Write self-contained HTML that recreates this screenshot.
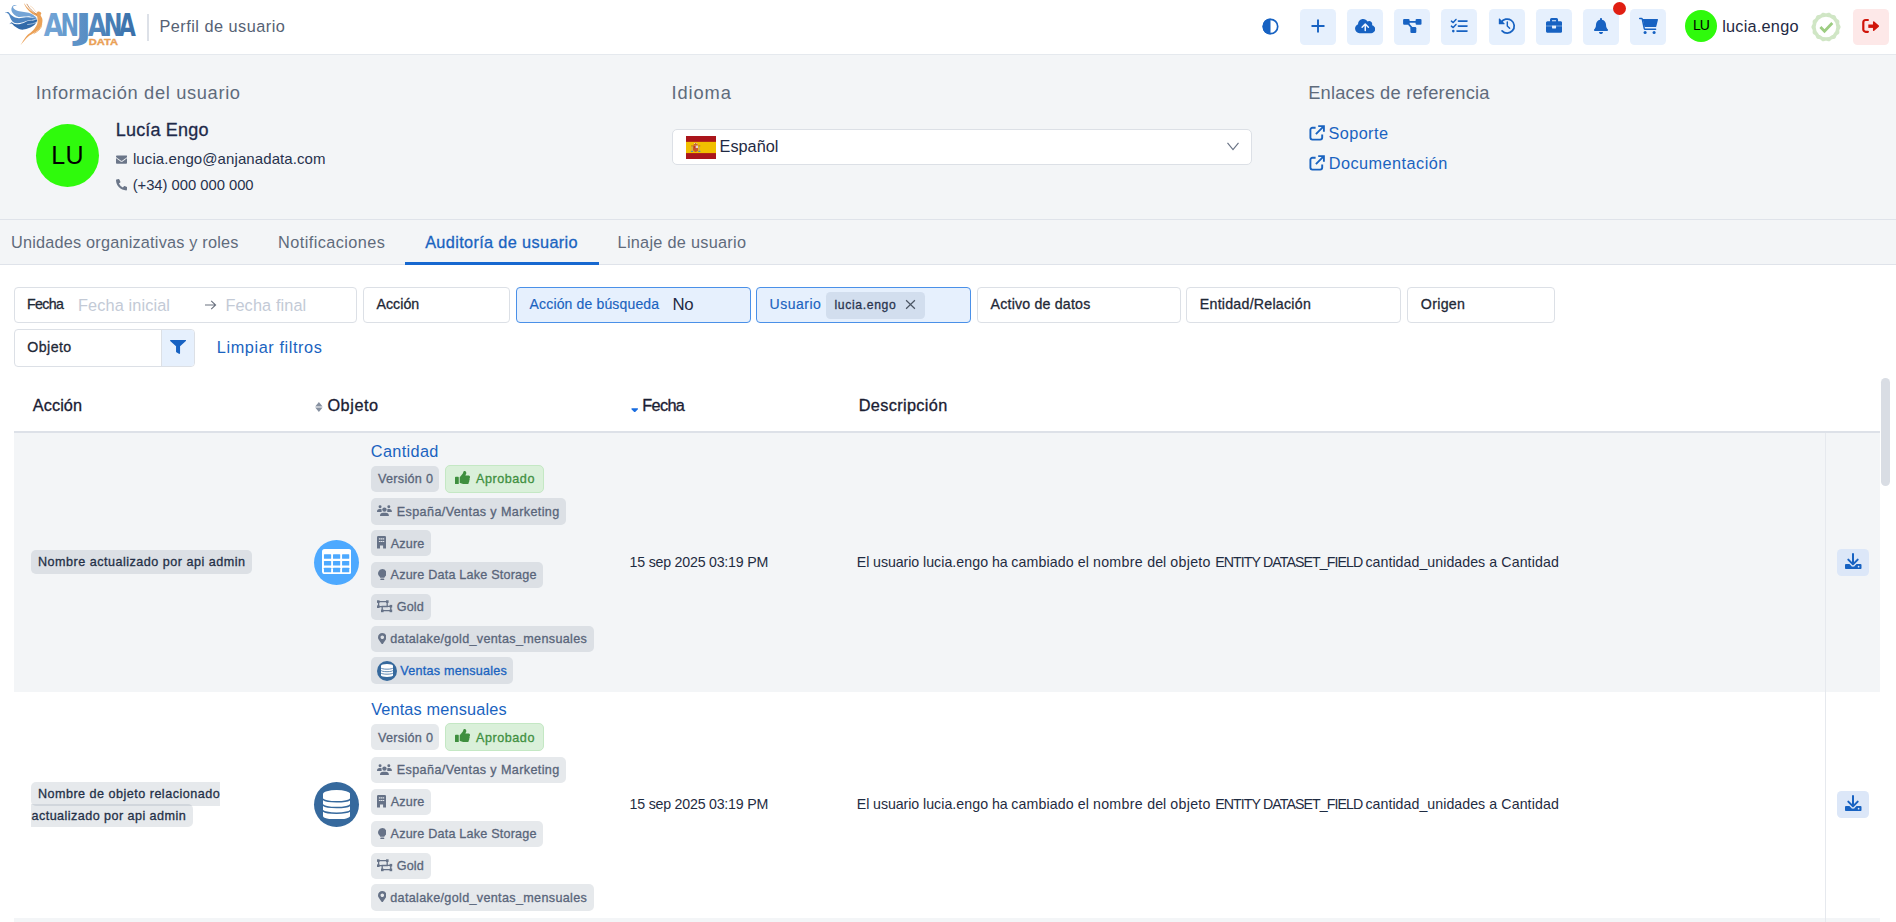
<!DOCTYPE html>
<html lang="es">
<head>
<meta charset="utf-8">
<title>Perfil de usuario</title>
<style>
html,body{margin:0;padding:0;background:#fff;}
body{width:1896px;height:922px;overflow:hidden;position:relative;font-family:"Liberation Sans",Arial,sans-serif;}
#app{position:absolute;left:0;top:0;width:1896px;height:922px;overflow:hidden;background:#fff;}
.a{position:absolute;box-sizing:border-box;display:block;}
.g{position:absolute;left:0;top:0;}
.t{position:absolute;white-space:nowrap;line-height:20px;font-weight:400;}
.t.sb{-webkit-text-stroke:0.3px currentColor;}
.t.md{-webkit-text-stroke:0.16px currentColor;}
.t.b{font-weight:700;}
a{text-decoration:none;color:inherit;}

</style>
</head>
<body>
<div id="app">
<header class="g">
<div class="a" style="left:0px;top:0px;width:1896px;height:55px;background:#fff;border-bottom:1px solid #e5e9ee;"></div>
<svg class="a" style="left:0px;top:0px;" width="150" height="54" viewBox="0 0 150 54"><defs><linearGradient id="lg0"><stop offset="0" stop-color="#75a7d8"/><stop offset="1" stop-color="#699ccf"/></linearGradient><linearGradient id="lg1"><stop offset="0" stop-color="#699ccf"/><stop offset="1" stop-color="#6095c9"/></linearGradient><linearGradient id="lg2"><stop offset="0" stop-color="#6095c9"/><stop offset="1" stop-color="#568bc1"/></linearGradient><linearGradient id="lg3"><stop offset="0" stop-color="#568bc1"/><stop offset="1" stop-color="#4b81b8"/></linearGradient><linearGradient id="lg4"><stop offset="0" stop-color="#4b81b8"/><stop offset="1" stop-color="#4379b1"/></linearGradient><linearGradient id="lg5"><stop offset="0" stop-color="#4379b1"/><stop offset="1" stop-color="#396fa9"/></linearGradient></defs><path fill="#74a4d6" d="M16.90 5.20C16.77 5.13 14.12 4.90 13.20 5.50C12.28 6.10 11.60 7.72 11.40 8.80C11.20 9.88 11.48 10.97 12.00 12.00C12.52 13.03 13.42 14.18 14.50 15.00C15.58 15.82 16.92 16.63 18.50 16.90C20.08 17.17 22.08 16.68 24.00 16.60C25.92 16.52 27.88 16.07 30.00 16.40C32.12 16.73 36.03 18.77 36.70 18.60C37.37 18.43 35.12 16.28 34.00 15.40C32.88 14.52 31.67 13.85 30.00 13.30C28.33 12.75 26.00 12.48 24.00 12.10C22.00 11.72 19.57 11.47 18.00 11.00C16.43 10.53 15.43 9.98 14.60 9.30C13.77 8.62 13.10 7.47 13.00 6.90C12.90 6.33 13.35 6.18 14.00 5.90C14.65 5.62 17.03 5.27 16.90 5.20Z"/><path fill="#4d84c0" d="M5.30 12.30C5.45 12.12 7.42 11.72 8.30 12.10C9.18 12.48 9.65 13.78 10.60 14.60C11.55 15.42 12.60 16.40 14.00 17.00C15.40 17.60 17.00 18.17 19.00 18.20C21.00 18.23 23.67 17.28 26.00 17.20C28.33 17.12 31.20 17.42 33.00 17.70C34.80 17.98 36.80 18.57 36.80 18.90C36.80 19.23 34.63 19.40 33.00 19.70C31.37 20.00 28.83 20.22 27.00 20.70C25.17 21.18 23.67 22.17 22.00 22.60C20.33 23.03 18.50 23.40 17.00 23.30C15.50 23.20 14.07 22.78 13.00 22.00C11.93 21.22 11.27 19.80 10.60 18.60C9.93 17.40 9.53 15.70 9.00 14.80C8.47 13.90 8.02 13.62 7.40 13.20C6.78 12.78 5.15 12.48 5.30 12.30Z"/><path fill="#326aa9" d="M9.30 24.40C9.43 24.18 10.88 22.58 11.40 22.30C11.92 22.02 11.80 22.42 12.40 22.70C13.00 22.98 13.90 23.75 15.00 24.00C16.10 24.25 17.50 24.42 19.00 24.20C20.50 23.98 22.50 23.23 24.00 22.70C25.50 22.17 26.33 21.42 28.00 21.00C29.67 20.58 32.50 20.43 34.00 20.20C35.50 19.97 36.57 19.30 37.00 19.60C37.43 19.90 37.10 21.07 36.60 22.00C36.10 22.93 35.27 24.18 34.00 25.20C32.73 26.22 30.75 27.37 29.00 28.10C27.25 28.83 25.17 29.47 23.50 29.60C21.83 29.73 20.42 29.40 19.00 28.90C17.58 28.40 16.12 27.42 15.00 26.60C13.88 25.78 13.03 24.50 12.30 24.00C11.57 23.50 11.10 23.53 10.60 23.60C10.10 23.67 9.17 24.62 9.30 24.40Z"/><path fill="none" stroke="#fff" stroke-width="0.55" stroke-linecap="round" d="M27.600 24.500C31 24.300 34 23.500 36.400 22.300"/><path fill="#eba157" d="M24.20 3.30C24.37 3.30 25.53 5.38 26.50 6.50C27.47 7.62 28.67 8.92 30.00 10.00C31.33 11.08 33.42 12.43 34.50 13.00C35.58 13.57 35.98 13.60 36.50 13.40C37.02 13.20 37.08 12.08 37.60 11.80C38.12 11.52 38.98 11.47 39.60 11.70C40.22 11.93 41.13 12.62 41.30 13.20C41.47 13.78 40.45 14.32 40.60 15.20C40.75 16.08 41.90 17.45 42.20 18.50C42.50 19.55 42.50 20.42 42.40 21.50C42.30 22.58 42.13 23.72 41.60 25.00C41.07 26.28 40.43 27.90 39.20 29.20C37.97 30.50 35.97 31.63 34.20 32.80C32.43 33.97 30.22 34.92 28.60 36.20C26.98 37.48 25.78 39.08 24.50 40.50C23.22 41.92 21.27 44.42 20.90 44.70C20.53 44.98 21.35 43.65 22.30 42.20C23.25 40.75 25.10 37.70 26.60 36.00C28.10 34.30 29.93 33.30 31.30 32.00C32.67 30.70 33.80 29.62 34.80 28.20C35.80 26.78 36.85 25.03 37.30 23.50C37.75 21.97 37.58 20.22 37.50 19.00C37.42 17.78 37.55 17.00 36.80 16.20C36.05 15.40 34.38 15.15 33.00 14.20C31.62 13.25 29.75 11.78 28.50 10.50C27.25 9.22 26.22 7.70 25.50 6.50C24.78 5.30 24.03 3.30 24.20 3.30Z"/><path fill="none" stroke="#b5703a" stroke-width="0.7" stroke-linecap="round" d="M27.00 4.20C27.42 4.83 28.50 6.78 29.50 8.00C30.50 9.22 31.83 10.47 33.00 11.50C34.17 12.53 35.92 13.75 36.50 14.20"/><path fill="none" stroke="#f0b57c" stroke-width="0.45" stroke-linecap="round" d="M30.50 6.20C30.92 6.50 32.25 7.20 33.00 8.00C33.75 8.80 34.42 10.30 35.00 11.00C35.58 11.70 36.25 12.00 36.50 12.20"/><path fill="none" stroke="#eba157" stroke-width="0.8" stroke-linecap="round" d="M41.60 24.20C41.53 24.67 41.72 25.95 41.20 27.00C40.68 28.05 39.70 29.42 38.50 30.50C37.30 31.58 34.75 33.00 34.00 33.50"/><g font-family="DejaVu Sans, Liberation Sans, sans-serif" font-weight="700"><text transform="translate(43.77 36.00) scale(0.804 1.000)" font-size="31.6" fill="url(#lg0)">A</text><text transform="translate(60.56 36.00) scale(0.703 1.000)" font-size="31.6" fill="url(#lg1)">N</text><text transform="translate(74.97 38.50) scale(1.450 1.106)" font-size="31.6" fill="url(#lg2)">J</text><text transform="translate(87.68 36.00) scale(0.770 1.000)" font-size="31.6" fill="url(#lg3)">A</text><text transform="translate(103.64 36.00) scale(0.708 1.000)" font-size="31.6" fill="url(#lg4)">N</text><text transform="translate(118.69 36.00) scale(0.700 1.000)" font-size="31.6" fill="url(#lg5)">A</text></g> <text x="88.8" y="44.9" font-family="Liberation Sans, Arial, sans-serif" font-weight="700" font-size="9.6" fill="#eaa055" stroke="#eaa055" stroke-width="0.35" textLength="29.2" lengthAdjust="spacingAndGlyphs">DATA</text></svg>
<div class="a" style="left:146.5px;top:13.5px;width:2px;height:27.5px;background:#dde1e8;"></div>

<span class="t" style="left:159.41px;top:16.00px;font-size:16.3px;color:#566274;letter-spacing:0.487px;">Perfil de usuario</span>

<div class="a" style="left:1300px;top:9px;width:36px;height:36px;background:#e6f0fd;border-radius:4.5px;"></div>
<div class="a" style="left:1347px;top:9px;width:36px;height:36px;background:#e6f0fd;border-radius:4.5px;"></div>
<div class="a" style="left:1394px;top:9px;width:36px;height:36px;background:#e6f0fd;border-radius:4.5px;"></div>
<div class="a" style="left:1441px;top:9px;width:36px;height:36px;background:#e6f0fd;border-radius:4.5px;"></div>
<div class="a" style="left:1489px;top:9px;width:36px;height:36px;background:#e6f0fd;border-radius:4.5px;"></div>
<div class="a" style="left:1536px;top:9px;width:36px;height:36px;background:#e6f0fd;border-radius:4.5px;"></div>
<div class="a" style="left:1583px;top:9px;width:36px;height:36px;background:#e6f0fd;border-radius:4.5px;"></div>
<div class="a" style="left:1630px;top:9px;width:36px;height:36px;background:#e6f0fd;border-radius:4.5px;"></div>
<svg class="a" style="left:1262.3px;top:17.5px;" width="17" height="17" viewBox="0 0 17 17"><circle cx="8.5" cy="8.5" r="7.2" fill="#fff" stroke="#1762c2" stroke-width="1.7"/><path d="M8.5 0.5 A8 8 0 0 0 8.5 16.5 Z" fill="#1762c2"/></svg>
<svg class="a" style="left:1310px;top:18px;" width="16" height="16" viewBox="0 0 16 16"><path d="M8 1.5V14.5M1.5 8H14.5" stroke="#1762c2" stroke-width="1.9" fill="none"/></svg>
<svg class="a" style="left:1355px;top:18px;" width="20.3" height="16.2" viewBox="0 0 640 512"><path fill="#1762c2" d="M537.6 226.6c4.1-10.7 6.4-22.4 6.4-34.6 0-53-43-96-96-96-19.7 0-38.1 6-53.3 16.2C367 64.2 315.3 32 256 32c-88.4 0-160 71.6-160 160 0 2.7.1 5.4.2 8.1C40.2 219.8 0 273.2 0 336c0 79.5 64.5 144 144 144h368c70.7 0 128-57.300 128-128 0-61.900-44-113.600-102.400-125.400z"/></svg>
<svg class="a" style="left:1356px;top:20px;" width="18" height="14" viewBox="1356 20 18 14"><path d="M1365.250 24.200V30.400M1362.100 27.300L1365.250 24l3.150 3.300" fill="none" stroke="#eef4fe" stroke-width="1.500" stroke-linecap="round" stroke-linejoin="round"/></svg>
<svg class="a" style="left:1400px;top:16px;" width="24" height="20" viewBox="1400 16 24 20"><rect x="1403.100" y="18.900" width="6.500" height="5.900" rx="1.100" fill="#1762c2"/><rect x="1415.600" y="18.900" width="5.900" height="5.900" rx="1.100" fill="#1762c2"/><rect x="1410.400" y="27.100" width="5.900" height="5.900" rx="1.100" fill="#1762c2"/><path d="M1409 21.850H1416M1408.600 24.100L1412.400 28.400" fill="none" stroke="#1762c2" stroke-width="1.600"/></svg>
<svg class="a" style="left:1448px;top:16px;" width="24" height="20" viewBox="1448 16 24 20"><path d="M1458.400 21.100H1467M1458.400 26.100H1467M1457 31.100H1467" fill="none" stroke="#1762c2" stroke-width="1.650" stroke-linecap="round"/><path d="M1451.400 21.100l1.800 1.500 2.800-3.200M1451.400 26.100l1.800 1.500 2.800-3.200" fill="none" stroke="#1762c2" stroke-width="1.450" stroke-linecap="round" stroke-linejoin="round"/><circle cx="1453.300" cy="31.100" r="1.300" fill="#1762c2"/></svg>
<svg class="a" style="left:1496px;top:16px;" width="24" height="20" viewBox="1496 16 24 20"><path d="M1501.140 22.550A7 7 0 1 1 1502.080 30.820" fill="none" stroke="#1762c2" stroke-width="1.750" stroke-linecap="round"/><path d="M1498.800 18.900a.5.5 0 0 1 .85-.35l4.900 4.900a.5.5 0 0 1-.35.850h-4.900a.5.500 0 0 1-.5-.500z" fill="#1762c2"/><path d="M1507.300 22V26l2.300 2.300" fill="none" stroke="#1762c2" stroke-width="1.450" stroke-linecap="round" stroke-linejoin="round"/></svg>
<div class="a" style="left:1546px;top:25.2px;width:6.05px;height:1.9px;background:#1762c2;opacity:.55;"></div>
<div class="a" style="left:1556.05px;top:25.2px;width:6.05px;height:1.9px;background:#1762c2;opacity:.55;"></div>
<svg class="a" style="left:1546px;top:17.15px;" width="16.1" height="16.9" viewBox="0 0 512 512" preserveAspectRatio="none"><path fill="#1762c2" d="M320 336c0 8.840-7.160 16-16 16h-96c-8.840 0-16-7.160-16-16v-48H0v144c0 25.600 22.400 48 48 48h416c25.600 0 48-22.400 48-48V288H320v48zm144-208h-80V80c0-25.600-22.400-48-48-48H176c-25.600 0-48 22.400-48 48v48H48c-25.600 0-48 22.400-48 48v80h512v-80c0-25.600-22.400-48-48-48zm-144 0H192V96h128v32z"/></svg>
<svg class="a" style="left:1594.3px;top:18px;" width="14" height="16.1" viewBox="0 0 448 512"><path fill="#1762c2" d="M224 512c35.320 0 63.970-28.650 63.970-64H160.030c0 35.350 28.650 64 63.970 64zm215.390-149.710c-19.320-20.760-55.470-51.990-55.470-154.290 0-77.700-54.480-139.900-127.940-155.160V32c0-17.670-14.320-32-31.980-32s-31.980 14.330-31.980 32v20.840C118.560 68.100 64.080 130.300 64.080 208c0 102.300-36.150 133.530-55.470 154.290-6 6.450-8.660 14.160-8.610 21.710.11 16.400 12.980 32 32.100 32h383.800c19.120 0 32-15.600 32.100-32 .05-7.550-2.610-15.270-8.610-21.710z"/></svg>
<svg class="a" style="left:1636px;top:16px;" width="26" height="20" viewBox="1636 16 26 20"><path d="M1642.700 19.100H1657.400a.6.600 0 0 1 .58.760l-1.700 6.600a.8.800 0 0 1-.78.600H1644.500z" fill="#1762c2"/><path d="M1639.700 18.500h1.700a.9.900 0 0 1 .88.720l2 9.400a.8.800 0 0 0 .78.630H1655.600" fill="none" stroke="#1762c2" stroke-width="1.450" stroke-linecap="round" stroke-linejoin="round"/><circle cx="1645.100" cy="32.450" r="1.550" fill="#1762c2"/><circle cx="1654.100" cy="32.450" r="1.550" fill="#1762c2"/></svg>
<div class="a" style="left:1612.6px;top:2px;width:13.4px;height:13.4px;background:#e01e12;border-radius:7px;"></div>
<div class="a" style="left:1685px;top:10px;width:32px;height:32px;background:#2ffa0c;border-radius:16px;"></div>

<span class="t" style="left:1693.01px;top:15.00px;font-size:14px;color:#000;letter-spacing:-1.021px;">LU</span>


<span class="t" style="left:1722.20px;top:16.00px;font-size:16.3px;color:#1f2a44;letter-spacing:0.231px;">lucia.engo</span>

<svg class="a" style="left:1811px;top:11.9px;" width="30" height="30" viewBox="0 0 30 30"><polygon points="29.60,15.00 29.54,15.51 29.37,16.00 29.12,16.48 28.85,16.95 28.60,17.40 28.41,17.85 28.31,18.32 28.29,18.81 28.33,19.33 28.37,19.87 28.38,20.40 28.30,20.92 28.12,21.40 27.83,21.82 27.45,22.19 27.01,22.51 26.57,22.80 26.15,23.10 25.80,23.44 25.52,23.82 25.29,24.27 25.10,24.75 24.91,25.26 24.67,25.74 24.37,26.16 23.99,26.50 23.53,26.74 23.02,26.89 22.49,26.99 21.96,27.06 21.46,27.16 21.01,27.31 20.59,27.55 20.20,27.86 19.81,28.22 19.42,28.59 18.99,28.91 18.53,29.15 18.03,29.27 17.52,29.27 16.99,29.18 16.47,29.03 15.97,28.86 15.48,28.74 15.00,28.70 14.52,28.74 14.03,28.86 13.53,29.03 13.01,29.18 12.48,29.27 11.97,29.27 11.47,29.15 11.01,28.91 10.58,28.59 10.19,28.22 9.80,27.86 9.41,27.55 8.99,27.31 8.54,27.16 8.04,27.06 7.51,26.99 6.98,26.89 6.47,26.74 6.01,26.50 5.63,26.16 5.33,25.74 5.09,25.26 4.90,24.75 4.71,24.27 4.48,23.82 4.20,23.44 3.85,23.10 3.43,22.80 2.99,22.51 2.55,22.19 2.17,21.82 1.88,21.40 1.70,20.92 1.62,20.40 1.63,19.87 1.67,19.33 1.71,18.81 1.69,18.32 1.59,17.85 1.40,17.40 1.15,16.95 0.88,16.48 0.63,16.00 0.46,15.51 0.40,15.00 0.46,14.49 0.63,14.00 0.88,13.52 1.15,13.05 1.40,12.60 1.59,12.15 1.69,11.68 1.71,11.19 1.67,10.67 1.63,10.13 1.62,9.60 1.70,9.08 1.88,8.60 2.17,8.18 2.55,7.81 2.99,7.49 3.43,7.20 3.85,6.90 4.20,6.56 4.48,6.18 4.71,5.73 4.90,5.25 5.09,4.74 5.33,4.26 5.63,3.84 6.01,3.50 6.47,3.26 6.98,3.11 7.51,3.01 8.04,2.94 8.54,2.84 8.99,2.69 9.41,2.45 9.80,2.14 10.19,1.78 10.58,1.41 11.01,1.09 11.47,0.85 11.97,0.73 12.48,0.73 13.01,0.82 13.53,0.97 14.03,1.14 14.52,1.26 15.00,1.30 15.48,1.26 15.97,1.14 16.47,0.97 16.99,0.82 17.52,0.73 18.03,0.73 18.53,0.85 18.99,1.09 19.42,1.41 19.81,1.78 20.20,2.14 20.59,2.45 21.01,2.69 21.46,2.84 21.96,2.94 22.49,3.01 23.02,3.11 23.53,3.26 23.99,3.50 24.37,3.84 24.67,4.26 24.91,4.74 25.10,5.25 25.29,5.73 25.52,6.18 25.80,6.56 26.15,6.90 26.57,7.20 27.01,7.49 27.45,7.81 27.83,8.18 28.12,8.60 28.30,9.08 28.38,9.60 28.37,10.13 28.33,10.67 28.29,11.19 28.31,11.68 28.41,12.15 28.60,12.60 28.85,13.05 29.12,13.52 29.37,14.00 29.54,14.49" fill="#d0e6c5"/><circle cx="15" cy="15" r="10.300" fill="#fff"/><path d="M9.400 15l4.100 4.300 7.800-8.300" fill="none" stroke="#9dcd82" stroke-width="2.800"/></svg>
<div class="a" style="left:1853px;top:9px;width:36px;height:36px;background:#fde8e8;border-radius:4.5px;"></div>
<svg class="a" style="left:1858px;top:15px;" width="26" height="22" viewBox="1858 15 26 22"><path d="M1867.900 20H1865.700a2.400 2.400 0 0 0-2.400 2.400v7a2.400 2.400 0 0 0 2.400 2.400h2.200" fill="none" stroke="#d0150a" stroke-width="2.200" stroke-linecap="round"/><path d="M1868.300 26.200H1874" fill="none" stroke="#d0150a" stroke-width="3.400"/><path d="M1873.700 22L1878.300 26.100l-4.600 4.100z" fill="#d0150a" stroke="#d0150a" stroke-width="1.500" stroke-linejoin="round"/></svg>
</header>
<section class="g">
<div class="a" style="left:0px;top:55px;width:1896px;height:210px;background:#f3f5f7;"></div>
<div class="a" style="left:0px;top:219px;width:1896px;height:1px;background:#dfe3ea;"></div>
<div class="a" style="left:0px;top:264px;width:1896px;height:1px;background:#dfe3ea;"></div>

<span class="t" style="left:35.63px;top:82.50px;font-size:18.3px;color:#5f6b7c;letter-spacing:0.654px;">Información del usuario</span>

<div class="a" style="left:36px;top:124px;width:63px;height:63px;background:#2ffa0c;border-radius:32px;"></div>

<span class="t" style="left:51.30px;top:145.00px;font-size:25px;color:#000;letter-spacing:0.297px;">LU</span>


<span class="t sb" style="left:115.76px;top:120.00px;font-size:18px;color:#1e2a4a;letter-spacing:0.179px;">Lucía Engo</span>

<svg class="a" style="left:115.9px;top:153.8px;" width="11.2" height="11.2" viewBox="0 0 512 512"><path fill="#6b7689" d="M502.300 190.800c3.900-3.100 9.700-.2 9.700 4.700V400c0 26.500-21.500 48-48 48H48c-26.500 0-48-21.500-48-48V195.600c0-5 5.700-7.800 9.700-4.700 22.400 17.400 52.100 39.500 154.100 113.600 21.100 15.400 56.700 47.800 92.200 47.600 35.700.3 72-32.800 92.300-47.600 102-74.100 131.600-96.300 154-113.700zM256 320c23.200.4 56.600-29.200 73.400-41.400 132.700-96.300 142.800-104.700 173.400-128.700 5.800-4.500 9.200-11.500 9.200-18.900v-19c0-26.500-21.500-48-48-48H48C21.500 64 0 85.500 0 112v19c0 7.400 3.400 14.300 9.200 18.900 30.600 23.900 40.700 32.400 173.400 128.700 16.800 12.200 50.200 41.800 73.400 41.400z"/></svg>

<span class="t" style="left:132.94px;top:148.50px;font-size:15px;color:#27324d;letter-spacing:0.094px;">lucia.engo@anjanadata.com</span>

<svg class="a" style="left:115.9px;top:179px;" width="11.4" height="11.5" viewBox="0 0 512 512"><path fill="#6b7689" d="M497.390 361.800l-112-48a24 24 0 0 0-28 6.900l-49.600 60.600A370.660 370.660 0 0 1 130.600 204.110l60.600-49.600a23.940 23.940 0 0 0 6.900-28l-48-112A24.160 24.160 0 0 0 122.600.61l-104 24A24 24 0 0 0 0 48c0 256.500 207.900 464 464 464a24 24 0 0 0 23.400-18.600l24-104a24.290 24.290 0 0 0-14.010-27.600z"/></svg>

<span class="t" style="left:132.65px;top:175.00px;font-size:14.8px;color:#27324d;letter-spacing:-0.027px;">(+34) 000 000 000</span>


<span class="t" style="left:671.62px;top:82.50px;font-size:18.3px;color:#5f6b7c;letter-spacing:0.880px;">Idioma</span>

<div class="a" style="left:672px;top:129px;width:580px;height:36px;background:#fff;border:1px solid #dce0e6;border-radius:5px;"></div>
<svg class="a" style="left:686px;top:136px;" width="30" height="23" viewBox="0 0 30 23"><rect width="30" height="23" fill="#aa151b"/><rect y="5.850" width="30" height="11.250" fill="#f1bf00"/><rect x="5.400" y="9.900" width="1.300" height="5" fill="#c8a85a"/><rect x="12.700" y="9.900" width="1.300" height="5" fill="#c8a85a"/><rect x="5.100" y="9.500" width="1.900" height="0.800" fill="#b5652b"/><rect x="12.400" y="9.500" width="1.900" height="0.800" fill="#b5652b"/><rect x="4.900" y="14.900" width="2.200" height="1" fill="#4a82c0"/><rect x="12.200" y="14.900" width="2.200" height="1" fill="#4a82c0"/><path d="M7.300 9.300h4.700v4a2.350 2.350 0 0 1-4.700 0z" fill="#b9362b"/><path d="M9.650 9.300h2.350v3h-2.350z" fill="#ead0d3"/><path d="M7.300 12.300h4.700v1a2.350 2.350 0 0 1-4.700 0z" fill="#c9582a"/><path d="M7.700 9.200c0-1.400.8-2.100 1.950-2.100s1.950.7 1.950 2.100z" fill="#bf3a2c"/><rect x="7.600" y="8.700" width="4.100" height="0.700" fill="#e4b93a"/><circle cx="8.500" cy="7.600" r="0.500" fill="#f4ead0"/><circle cx="9.650" cy="7.100" r="0.500" fill="#e4b93a"/><circle cx="10.800" cy="7.600" r="0.500" fill="#f4ead0"/></svg>

<span class="t" style="left:719.56px;top:136.00px;font-size:16.3px;color:#1f2a44;">Español</span>

<svg class="a" style="left:1225.7px;top:141.4px;" width="14" height="11" viewBox="0 0 14 11"><path d="M1.500 1.800L7 8.700l5.500-6.900" fill="none" stroke="#697385" stroke-width="1.150"/></svg>

<span class="t" style="left:1308.13px;top:82.50px;font-size:18.3px;color:#5f6b7c;letter-spacing:0.227px;">Enlaces de referencia</span>

<svg class="a" style="left:1308.6px;top:124.8px;" width="16" height="16" viewBox="0 0 16 16"><path d="M6.6 2.8H3.4A2 2 0 0 0 1.4 4.8v7.8a2 2 0 0 0 2 2h7.8a2 2 0 0 0 2-2V9.4" fill="none" stroke="#1a63c0" stroke-width="1.9"/><path d="M9.2 1.1h5.7v5.7M14.6 1.4L6.9 9.1" fill="none" stroke="#1a63c0" stroke-width="1.9"/></svg>
<a>
<span class="t" style="left:1328.39px;top:123.00px;font-size:16.3px;color:#1a63c0;letter-spacing:0.428px;">Soporte</span>
</a>
<svg class="a" style="left:1308.6px;top:154.8px;" width="16" height="16" viewBox="0 0 16 16"><path d="M6.6 2.8H3.4A2 2 0 0 0 1.4 4.8v7.8a2 2 0 0 0 2 2h7.8a2 2 0 0 0 2-2V9.4" fill="none" stroke="#1a63c0" stroke-width="1.9"/><path d="M9.2 1.1h5.7v5.7M14.6 1.4L6.9 9.1" fill="none" stroke="#1a63c0" stroke-width="1.9"/></svg>
<a>
<span class="t" style="left:1328.66px;top:153.00px;font-size:16.3px;color:#1a63c0;letter-spacing:0.466px;">Documentación</span>
</a>
</section>
<nav class="g">

<span class="t" style="left:10.98px;top:232.00px;font-size:16.3px;color:#5f6b7c;letter-spacing:0.198px;">Unidades organizativas y roles</span>


<span class="t" style="left:278.03px;top:232.00px;font-size:16.3px;color:#5f6b7c;letter-spacing:0.429px;">Notificaciones</span>


<span class="t sb" style="left:425.13px;top:232.00px;font-size:16.3px;color:#1a63c0;letter-spacing:0.355px;">Auditoría de usuario</span>


<span class="t" style="left:617.56px;top:232.00px;font-size:16.3px;color:#5f6b7c;letter-spacing:0.274px;">Linaje de usuario</span>

<div class="a" style="left:405px;top:262px;width:194px;height:3px;background:#1668d0;"></div>
</nav>
<div class="g">
<div class="a" style="left:14px;top:287px;width:343px;height:36px;background:#fff;border:1px solid #dce0e6;border-radius:4px;"></div>

<span class="t sb" style="left:26.95px;top:294.00px;font-size:14.2px;color:#1f2937;letter-spacing:-0.617px;">Fecha</span>


<span class="t" style="left:78.03px;top:295.00px;font-size:16.3px;color:#c3cad6;letter-spacing:0.118px;">Fecha inicial</span>

<svg class="a" style="left:203.5px;top:299px;" width="13" height="12" viewBox="0 0 13 12"><path d="M1 6h10.4M7.2 1.8L11.6 6 7.2 10.2" fill="none" stroke="#6b7280" stroke-width="1.1"/></svg>

<span class="t" style="left:225.39px;top:295.00px;font-size:16.3px;color:#c3cad6;letter-spacing:0.122px;">Fecha final</span>

<div class="a" style="left:363px;top:287px;width:147px;height:36px;background:#fff;border:1px solid #dce0e6;border-radius:4px;"></div>

<span class="t sb" style="left:376.43px;top:294.00px;font-size:14.2px;color:#1f2937;letter-spacing:0.043px;">Acción</span>

<div class="a" style="left:516px;top:287px;width:235px;height:36px;background:#e6f0fd;border:1px solid #4a90e8;border-radius:4px;"></div>

<span class="t md" style="left:529.60px;top:294.00px;font-size:14px;color:#1a63c0;letter-spacing:0.153px;">Acción de búsqueda</span>


<span class="t" style="left:672.43px;top:294.50px;font-size:16.8px;color:#1f2a44;letter-spacing:-0.333px;">No</span>

<div class="a" style="left:756px;top:287px;width:215px;height:36px;background:#e6f0fd;border:1px solid #4a90e8;border-radius:4px;"></div>

<span class="t md" style="left:769.50px;top:294.00px;font-size:14px;color:#1a63c0;letter-spacing:0.523px;">Usuario</span>

<div class="a" style="left:826px;top:292px;width:99px;height:27px;background:#d2deee;border-radius:4.5px;"></div>

<span class="t sb" style="left:834.52px;top:295.00px;font-size:12.2px;color:#2a3550;letter-spacing:0.635px;">lucia.engo</span>

<svg class="a" style="left:905px;top:299.2px;" width="11" height="11" viewBox="0 0 11 11"><path d="M1.100 1.300l8.800 8.400M9.900 1.300L1.100 9.700" stroke="#4b5563" stroke-width="1.2" fill="none"/></svg>
<div class="a" style="left:977px;top:287px;width:204px;height:36px;background:#fff;border:1px solid #dce0e6;border-radius:4px;"></div>

<span class="t sb" style="left:990.59px;top:294.00px;font-size:14.2px;color:#1f2937;letter-spacing:0.191px;">Activo de datos</span>

<div class="a" style="left:1186px;top:287px;width:215px;height:36px;background:#fff;border:1px solid #dce0e6;border-radius:4px;"></div>

<span class="t sb" style="left:1199.80px;top:294.00px;font-size:14.2px;color:#1f2937;letter-spacing:0.248px;">Entidad/Relación</span>

<div class="a" style="left:1407px;top:287px;width:148px;height:36px;background:#fff;border:1px solid #dce0e6;border-radius:4px;"></div>

<span class="t sb" style="left:1420.81px;top:294.00px;font-size:14.2px;color:#1f2937;letter-spacing:0.308px;">Origen</span>

<div class="a" style="left:14px;top:329px;width:181px;height:38px;background:#fff;border:1px solid #dce0e6;border-radius:4px;"></div>
<div class="a" style="left:161px;top:330px;width:33px;height:36px;background:#e6f0fd;border-left:1px solid #dce0e6;border-radius:0 3px 3px 0;"></div>

<span class="t sb" style="left:27.30px;top:337.00px;font-size:14.2px;color:#1f2937;letter-spacing:0.429px;">Objeto</span>

<svg class="a" style="left:170.1px;top:340.1px;" width="16.1" height="13.9" viewBox="0 0 512 512" preserveAspectRatio="none"><path fill="#1762c2" d="M487.976 0H24.028C2.710 0-8.047 25.866 7.058 40.971L192 225.941V432c0 7.831 3.821 15.170 10.237 19.662l80 55.980C298.020 518.690 320 507.493 320 487.980V225.941l184.947-184.970C520.021 25.896 509.338 0 487.976 0z"/></svg>
<a>
<span class="t" style="left:216.80px;top:337.00px;font-size:16.3px;color:#1a63c0;letter-spacing:0.589px;">Limpiar filtros</span>
</a>
</div>
<main class="g">

<span class="t sb" style="left:32.85px;top:395.00px;font-size:16.3px;color:#1a2033;letter-spacing:0.067px;">Acción</span>

<svg class="a" style="left:315.1px;top:401.9px;" width="7.8" height="9.9" viewBox="0 0 7.8 9.9"><path d="M3.900 0L7.600 4.500H0.200zM3.900 9.900L0.200 5.400h7.400z" fill="#8791a1"/></svg>

<span class="t sb" style="left:327.38px;top:395.00px;font-size:16.3px;color:#1a2033;letter-spacing:0.561px;">Objeto</span>

<svg class="a" style="left:630.5px;top:407.6px;" width="7.4" height="4.4" viewBox="0 0 7.4 4.4"><path d="M0.9 0.3h5.6a.6 .6 0 0 1 .45 1L4.2 4a.7 .7 0 0 1-1 0L.45 1.3a.6 .6 0 0 1 .45-1z" fill="#1a6de0"/></svg>

<span class="t sb" style="left:642.24px;top:395.00px;font-size:16.3px;color:#1a2033;letter-spacing:-0.639px;">Fecha</span>


<span class="t sb" style="left:858.64px;top:395.00px;font-size:16.3px;color:#1a2033;letter-spacing:0.358px;">Descripción</span>

<div class="a" style="left:14px;top:431px;width:1866px;height:2px;background:#dde1e8;"></div>
<div class="a" style="left:1880.5px;top:378px;width:9px;height:108px;background:#d9dde4;border-radius:4.5px;"></div>
<div class="a" style="left:14px;top:433px;width:1866px;height:259px;background:#f3f5f7;"></div>
<div class="a" style="left:1825px;top:433px;width:1px;height:489px;background:#e6e9ee;"></div>
<div class="a" style="left:31px;top:550px;width:221px;height:24px;background:rgba(100,116,139,.16);border-radius:5px;"></div>

<span class="t sb" style="left:37.93px;top:552.00px;font-size:12.6px;color:#243047;letter-spacing:0.494px;">Nombre actualizado por api admin</span>

<div class="a" style="left:314px;top:540px;width:45px;height:45px;background:#4da9ff;border-radius:23px;"></div>
<svg class="a" style="left:321.9px;top:549.2px;" width="29.3" height="25.1" viewBox="0 0 29.300 25.100"><rect width="29.300" height="25.100" rx="2.600" fill="#fff"/><rect x="1.95" y="5.2" width="7.200" height="4.600" rx="0.500" fill="#4da9ff"/><rect x="1.95" y="11.95" width="7.200" height="4.600" rx="0.500" fill="#4da9ff"/><rect x="1.95" y="18.7" width="7.200" height="4.600" rx="0.500" fill="#4da9ff"/><rect x="11" y="5.2" width="7.200" height="4.600" rx="0.500" fill="#4da9ff"/><rect x="11" y="11.95" width="7.200" height="4.600" rx="0.500" fill="#4da9ff"/><rect x="11" y="18.7" width="7.200" height="4.600" rx="0.500" fill="#4da9ff"/><rect x="20.05" y="5.2" width="7.200" height="4.600" rx="0.500" fill="#4da9ff"/><rect x="20.05" y="11.95" width="7.200" height="4.600" rx="0.500" fill="#4da9ff"/><rect x="20.05" y="18.7" width="7.200" height="4.600" rx="0.500" fill="#4da9ff"/></svg>
<a>
<span class="t" style="left:370.83px;top:441.00px;font-size:16.3px;color:#1a63c0;letter-spacing:0.346px;">Cantidad</span>
</a>
<div class="a" style="left:371px;top:466px;width:68px;height:26px;background:rgba(100,116,139,.16);border-radius:5px;"></div>
<span class="t sb" style="left:377.93px;top:469.00px;font-size:12.6px;color:#59657a;letter-spacing:0.316px;">Versión 0</span>
<div class="a" style="left:445px;top:465px;width:99px;height:28px;background:#daf0da;border:1px solid #c4e8c4;border-radius:5px;"></div><svg class="a" style="left:454.9px;top:470.9px;" width="15.1" height="13.3" viewBox="0 0 512 512" preserveAspectRatio="none"><path fill="#3f8f3f" d="M104 224H24c-13.255 0-24 10.745-24 24v240c0 13.255 10.745 24 24 24h80c13.255 0 24-10.745 24-24V248c0-13.255-10.745-24-24-24zM384 81.452c0 42.416-25.970 66.208-33.277 94.548h101.723c33.397 0 59.397 27.746 59.553 58.098.084 17.938-7.546 37.249-19.439 49.197l-.11.110c9.836 23.337 8.237 56.037-9.308 79.469 8.681 25.895-.069 57.704-16.382 74.757 4.298 17.598 2.244 32.575-6.148 44.632C440.202 511.587 389.616 512 346.839 512l-2.845-.001c-48.287-.017-87.806-17.598-119.560-31.725-15.957-7.099-36.821-15.887-52.651-16.178-6.540-.120-11.783-5.457-11.783-11.998v-213.770c0-3.200 1.282-6.271 3.558-8.521 39.614-39.144 56.648-80.587 89.117-113.111 14.804-14.832 20.188-37.236 25.393-58.902C282.515 39.293 291.817 0 312 0c24 0 72 8 72 81.452z"/></svg>
<span class="t sb" style="left:476.10px;top:469.00px;font-size:12.6px;color:#3f8f3f;letter-spacing:0.525px;">Aprobado</span>
<div class="a" style="left:371px;top:498px;width:195px;height:27px;background:rgba(100,116,139,.16);border-radius:5px;"></div><svg class="a" style="left:377.45px;top:504.6px;" width="14.9" height="11.8" viewBox="0 0 15 11.8"><circle cx="3.100" cy="1.700" r="1.500" fill="#667287"/><circle cx="11.900" cy="1.700" r="1.500" fill="#667287"/><circle cx="7.500" cy="4.600" r="2.200" fill="#667287"/><path d="M0 6.700a2.600 2.600 0 0 1 2.600-2.600h1a2.600 2.600 0 0 1 1.300.350a3.600 3.600 0 0 0-.2 2.250v.4H0zM15 6.700a2.600 2.600 0 0 0-2.600-2.600h-1a2.600 2.600 0 0 0-1.300.350a3.600 3.600 0 0 1 .2 2.250v.4H15z" fill="#667287"/><path d="M3 11.100a3.300 3.300 0 0 1 3.300-3.300h2.400a3.300 3.300 0 0 1 3.300 3.300a.700.700 0 0 1-.7.700H3.700a.700.700 0 0 1-.7-.700z" fill="#667287"/></svg>
<span class="t sb" style="left:396.78px;top:502.00px;font-size:12.6px;color:#59657a;letter-spacing:0.381px;">España/Ventas y Marketing</span>
<div class="a" style="left:371px;top:530px;width:60px;height:26px;background:rgba(100,116,139,.16);border-radius:5px;"></div><svg class="a" style="left:377.4px;top:536.2px;" width="9.1" height="12.6" viewBox="0 0 9.1 12.6"><path d="M1.300 0h6.500a1.300 1.300 0 0 1 1.300 1.300V12.600H6.100V9.600H3v3H0V1.300A1.300 1.300 0 0 1 1.300 0z" fill="#667287"/><path d="M1.900 2.900h5.300M1.900 5.500h5.300" stroke="#dee2e7" stroke-width="1.100" stroke-dasharray="1.500 0.400" fill="none"/></svg>
<span class="t sb" style="left:390.70px;top:534.00px;font-size:12.6px;color:#59657a;letter-spacing:0.181px;">Azure</span>
<div class="a" style="left:371px;top:562px;width:172px;height:26px;background:rgba(100,116,139,.16);border-radius:5px;"></div><svg class="a" style="left:377.7px;top:569.2px;" width="8.6" height="11.2" viewBox="0 0 8.600 11.200"><path d="M4.300 0a4.300 4.300 0 0 1 3 7.300c-.5.500-.8 1-.9 1.500H2.200c-.1-.5-.4-1-.9-1.500A4.300 4.300 0 0 1 4.300 0z" fill="#667287"/><rect x="2.300" y="9.400" width="4" height="1.800" rx="0.800" fill="#667287"/></svg>
<span class="t sb" style="left:390.54px;top:565.00px;font-size:12.6px;color:#59657a;letter-spacing:0.208px;">Azure Data Lake Storage</span>
<div class="a" style="left:371px;top:594px;width:60px;height:26px;background:rgba(100,116,139,.16);border-radius:5px;"></div><svg class="a" style="left:377.2px;top:600.4px;" width="15.4" height="12.4" viewBox="0 0 15.400 12.400"><path d="M1.600 1.700h8.600v5H1.600z" fill="none" stroke="#667287" stroke-width="1.300"/><path d="M5.200 6.400h8.600v4.300H5.200z" fill="none" stroke="#667287" stroke-width="1.300"/><rect x="0" y="0.300" width="2.600" height="2.600" fill="#667287"/><rect x="9" y="0.300" width="2.600" height="2.600" fill="#667287"/><rect x="0" y="5.400" width="2.600" height="2.600" fill="#667287"/><rect x="12.600" y="4.900" width="2.600" height="2.600" fill="#667287"/><rect x="4" y="9.600" width="2.600" height="2.600" fill="#667287"/><rect x="12.600" y="9.600" width="2.600" height="2.600" fill="#667287"/></svg>
<span class="t sb" style="left:396.75px;top:597.00px;font-size:12.6px;color:#59657a;letter-spacing:0.126px;">Gold</span>
<div class="a" style="left:371px;top:626px;width:223px;height:26px;background:rgba(100,116,139,.16);border-radius:5px;"></div><svg class="a" style="left:377.7px;top:632.8px;" width="8.6" height="11.4" viewBox="0 0 384 512"><path fill="#667287" d="M172.268 501.670C26.970 291.031 0 269.413 0 192 0 85.961 85.961 0 192 0s192 85.961 192 192c0 77.413-26.970 99.031-172.268 309.670-9.535 13.774-29.930 13.773-39.464 0zM192 272c44.183 0 80-35.817 80-80s-35.817-80-80-80-80 35.817-80 80 35.817 80 80 80z"/></svg>
<span class="t sb" style="left:390.21px;top:629.00px;font-size:12.6px;color:#59657a;letter-spacing:0.334px;">datalake/gold_ventas_mensuales</span>

<div class="a" style="left:371px;top:657px;width:142px;height:27px;background:rgba(100,116,139,.16);border-radius:5px;"></div>
<div class="a" style="left:377px;top:660.7px;width:20px;height:20px;background:#36699d;border-radius:10px;"></div>
<svg class="a" style="left:381px;top:664.2px;" width="12" height="13" viewBox="0 0 12 13"><path d="M0 1.76 A6.00 1.76 0 0 1 12.00 1.76 V11.42 A6.00 1.58 0 0 1 0 11.42 Z" fill="#fff"/><path d="M0 3.86 A6.00 1.32 0 0 0 12.00 3.86M0 6.37 A6.00 1.32 0 0 0 12.00 6.37M0 8.87 A6.00 1.32 0 0 0 12.00 8.87" fill="none" stroke="#36699d" stroke-width="0.8"/></svg>
<a>
<span class="t sb" style="left:400.27px;top:661.00px;font-size:12.6px;color:#1a63c0;letter-spacing:0.236px;">Ventas mensuales</span>
</a>

<span class="t" style="left:629.62px;top:552.00px;font-size:14.2px;color:#1f2c42;letter-spacing:-0.219px;">15 sep 2025 03:19 PM</span>


<span class="t" style="left:856.75px;top:552.00px;font-size:14.2px;color:#1f2c42;"><span style="letter-spacing:-0.075px">El usuario </span><span style="letter-spacing:0.044px">lucia.engo </span><span style="letter-spacing:-0.177px">ha </span><span style="letter-spacing:0.104px">cambiado </span><span style="letter-spacing:0.073px">el </span><span style="letter-spacing:0.337px">nombre </span><span style="letter-spacing:0.007px">del </span><span style="letter-spacing:0.328px">objeto </span><span style="letter-spacing:-0.905px">ENTITY </span><span style="letter-spacing:-0.919px">DATASET_FIELD </span><span style="letter-spacing:0.042px">cantidad_unidades </span><span style="letter-spacing:0.103px">a Cantidad</span></span>

<div class="a" style="left:1837px;top:549px;width:32px;height:27px;background:#dce7f8;border-radius:4.5px;"></div><svg class="a" style="left:1845.4px;top:552.8px;" width="16.5" height="16.2" viewBox="0 0 16.5 16.2"><rect x="0" y="11.100" width="16.500" height="5" rx="1" fill="#1762c2"/><path d="M8 5V11.500M3.300 6.600L8 11.400l4.700-4.800" fill="none" stroke="#dce7f8" stroke-width="4.400" stroke-linecap="round" stroke-linejoin="round"/><path d="M8 1V11.300M3.300 6.600L8 11.400l4.700-4.800" fill="none" stroke="#1762c2" stroke-width="2" stroke-linecap="round" stroke-linejoin="round"/><circle cx="13.600" cy="13.700" r="0.850" fill="#dce7f8"/></svg>
<div class="a" style="left:14px;top:692px;width:1866px;height:226px;background:#fff;"></div>
<div class="a" style="left:14px;top:918px;width:1866px;height:4px;background:#f3f5f7;"></div>
<div class="a" style="left:1825px;top:433px;width:1px;height:489px;background:#e6e9ee;"></div>
<div class="a" style="left:31px;top:782px;width:189px;height:24px;background:rgba(100,116,139,.16);border-radius:5px 0 0 5px;"></div>
<div class="a" style="left:31px;top:804px;width:162px;height:23px;background:rgba(100,116,139,.16);border-radius:0 5px 5px 0;"></div>

<span class="t sb" style="left:37.92px;top:784.00px;font-size:12.6px;color:#243047;letter-spacing:0.482px;">Nombre de objeto relacionado</span>


<span class="t sb" style="left:31.51px;top:806.00px;font-size:12.6px;color:#243047;letter-spacing:0.444px;">actualizado por api admin</span>

<div class="a" style="left:314px;top:782px;width:45px;height:45px;background:#36699d;border-radius:23px;"></div>
<svg class="a" style="left:323px;top:789.6px;" width="27.2" height="29.6" viewBox="0 0 27.2 29.6"><path d="M0 4.00 A13.60 4.00 0 0 1 27.20 4.00 V26.00 A13.60 3.60 0 0 1 0 26.00 Z" fill="#fff"/><path d="M0 8.80 A13.60 3.00 0 0 0 27.20 8.80M0 14.50 A13.60 3.00 0 0 0 27.20 14.50M0 20.20 A13.60 3.00 0 0 0 27.20 20.20" fill="none" stroke="#36699d" stroke-width="1.5"/></svg>
<a>
<span class="t" style="left:371.14px;top:699.00px;font-size:16.3px;color:#1a63c0;letter-spacing:0.157px;">Ventas mensuales</span>
</a>
<div class="a" style="left:371px;top:724px;width:68px;height:26px;background:rgba(100,116,139,.16);border-radius:5px;"></div>
<span class="t sb" style="left:377.93px;top:728.00px;font-size:12.6px;color:#59657a;letter-spacing:0.316px;">Versión 0</span>
<div class="a" style="left:445px;top:723px;width:99px;height:28px;background:#daf0da;border:1px solid #c4e8c4;border-radius:5px;"></div><svg class="a" style="left:454.9px;top:728.9px;" width="15.1" height="13.3" viewBox="0 0 512 512" preserveAspectRatio="none"><path fill="#3f8f3f" d="M104 224H24c-13.255 0-24 10.745-24 24v240c0 13.255 10.745 24 24 24h80c13.255 0 24-10.745 24-24V248c0-13.255-10.745-24-24-24zM384 81.452c0 42.416-25.970 66.208-33.277 94.548h101.723c33.397 0 59.397 27.746 59.553 58.098.084 17.938-7.546 37.249-19.439 49.197l-.11.110c9.836 23.337 8.237 56.037-9.308 79.469 8.681 25.895-.069 57.704-16.382 74.757 4.298 17.598 2.244 32.575-6.148 44.632C440.202 511.587 389.616 512 346.839 512l-2.845-.001c-48.287-.017-87.806-17.598-119.560-31.725-15.957-7.099-36.821-15.887-52.651-16.178-6.540-.120-11.783-5.457-11.783-11.998v-213.770c0-3.200 1.282-6.271 3.558-8.521 39.614-39.144 56.648-80.587 89.117-113.111 14.804-14.832 20.188-37.236 25.393-58.902C282.515 39.293 291.817 0 312 0c24 0 72 8 72 81.452z"/></svg>
<span class="t sb" style="left:476.10px;top:728.00px;font-size:12.6px;color:#3f8f3f;letter-spacing:0.525px;">Aprobado</span>
<div class="a" style="left:371px;top:757px;width:195px;height:26px;background:rgba(100,116,139,.16);border-radius:5px;"></div><svg class="a" style="left:377.45px;top:763.6px;" width="14.9" height="11.8" viewBox="0 0 15 11.8"><circle cx="3.100" cy="1.700" r="1.500" fill="#667287"/><circle cx="11.900" cy="1.700" r="1.500" fill="#667287"/><circle cx="7.500" cy="4.600" r="2.200" fill="#667287"/><path d="M0 6.700a2.600 2.600 0 0 1 2.600-2.600h1a2.600 2.600 0 0 1 1.300.350a3.600 3.600 0 0 0-.2 2.250v.4H0zM15 6.700a2.600 2.600 0 0 0-2.600-2.600h-1a2.600 2.600 0 0 0-1.300.350a3.600 3.600 0 0 1 .2 2.250v.4H15z" fill="#667287"/><path d="M3 11.100a3.300 3.300 0 0 1 3.300-3.300h2.400a3.300 3.300 0 0 1 3.300 3.300a.700.700 0 0 1-.7.700H3.700a.700.700 0 0 1-.7-.700z" fill="#667287"/></svg>
<span class="t sb" style="left:396.78px;top:760.00px;font-size:12.6px;color:#59657a;letter-spacing:0.381px;">España/Ventas y Marketing</span>
<div class="a" style="left:371px;top:789px;width:60px;height:26px;background:rgba(100,116,139,.16);border-radius:5px;"></div><svg class="a" style="left:377.4px;top:795.2px;" width="9.1" height="12.6" viewBox="0 0 9.1 12.6"><path d="M1.300 0h6.500a1.300 1.300 0 0 1 1.300 1.300V12.600H6.100V9.600H3v3H0V1.300A1.300 1.300 0 0 1 1.300 0z" fill="#667287"/><path d="M1.900 2.900h5.300M1.900 5.500h5.300" stroke="#dee2e7" stroke-width="1.100" stroke-dasharray="1.500 0.400" fill="none"/></svg>
<span class="t sb" style="left:390.70px;top:792.00px;font-size:12.6px;color:#59657a;letter-spacing:0.181px;">Azure</span>
<div class="a" style="left:371px;top:821px;width:172px;height:26px;background:rgba(100,116,139,.16);border-radius:5px;"></div><svg class="a" style="left:377.7px;top:828.2px;" width="8.6" height="11.2" viewBox="0 0 8.600 11.200"><path d="M4.300 0a4.300 4.300 0 0 1 3 7.300c-.5.500-.8 1-.9 1.500H2.200c-.1-.5-.4-1-.9-1.500A4.300 4.300 0 0 1 4.300 0z" fill="#667287"/><rect x="2.300" y="9.400" width="4" height="1.800" rx="0.800" fill="#667287"/></svg>
<span class="t sb" style="left:390.54px;top:824.00px;font-size:12.6px;color:#59657a;letter-spacing:0.208px;">Azure Data Lake Storage</span>
<div class="a" style="left:371px;top:853px;width:60px;height:26px;background:rgba(100,116,139,.16);border-radius:5px;"></div><svg class="a" style="left:377.2px;top:859.4px;" width="15.4" height="12.4" viewBox="0 0 15.400 12.400"><path d="M1.600 1.700h8.600v5H1.600z" fill="none" stroke="#667287" stroke-width="1.300"/><path d="M5.200 6.400h8.600v4.300H5.200z" fill="none" stroke="#667287" stroke-width="1.300"/><rect x="0" y="0.300" width="2.600" height="2.600" fill="#667287"/><rect x="9" y="0.300" width="2.600" height="2.600" fill="#667287"/><rect x="0" y="5.400" width="2.600" height="2.600" fill="#667287"/><rect x="12.600" y="4.900" width="2.600" height="2.600" fill="#667287"/><rect x="4" y="9.600" width="2.600" height="2.600" fill="#667287"/><rect x="12.600" y="9.600" width="2.600" height="2.600" fill="#667287"/></svg>
<span class="t sb" style="left:396.75px;top:856.00px;font-size:12.6px;color:#59657a;letter-spacing:0.126px;">Gold</span>
<div class="a" style="left:371px;top:884px;width:223px;height:27px;background:rgba(100,116,139,.16);border-radius:5px;"></div><svg class="a" style="left:377.7px;top:890.8px;" width="8.6" height="11.4" viewBox="0 0 384 512"><path fill="#667287" d="M172.268 501.670C26.970 291.031 0 269.413 0 192 0 85.961 85.961 0 192 0s192 85.961 192 192c0 77.413-26.970 99.031-172.268 309.670-9.535 13.774-29.930 13.773-39.464 0zM192 272c44.183 0 80-35.817 80-80s-35.817-80-80-80-80 35.817-80 80 35.817 80 80 80z"/></svg>
<span class="t sb" style="left:390.21px;top:888.00px;font-size:12.6px;color:#59657a;letter-spacing:0.334px;">datalake/gold_ventas_mensuales</span>


<span class="t" style="left:629.62px;top:794.00px;font-size:14.2px;color:#1f2c42;letter-spacing:-0.219px;">15 sep 2025 03:19 PM</span>


<span class="t" style="left:856.75px;top:794.00px;font-size:14.2px;color:#1f2c42;"><span style="letter-spacing:-0.075px">El usuario </span><span style="letter-spacing:0.044px">lucia.engo </span><span style="letter-spacing:-0.177px">ha </span><span style="letter-spacing:0.104px">cambiado </span><span style="letter-spacing:0.073px">el </span><span style="letter-spacing:0.337px">nombre </span><span style="letter-spacing:0.007px">del </span><span style="letter-spacing:0.328px">objeto </span><span style="letter-spacing:-0.905px">ENTITY </span><span style="letter-spacing:-0.919px">DATASET_FIELD </span><span style="letter-spacing:0.042px">cantidad_unidades </span><span style="letter-spacing:0.103px">a Cantidad</span></span>

<div class="a" style="left:1837px;top:791px;width:32px;height:27px;background:#dce7f8;border-radius:4.5px;"></div><svg class="a" style="left:1845.4px;top:794.8px;" width="16.5" height="16.2" viewBox="0 0 16.5 16.2"><rect x="0" y="11.100" width="16.500" height="5" rx="1" fill="#1762c2"/><path d="M8 5V11.500M3.300 6.600L8 11.400l4.700-4.800" fill="none" stroke="#dce7f8" stroke-width="4.400" stroke-linecap="round" stroke-linejoin="round"/><path d="M8 1V11.300M3.300 6.600L8 11.400l4.700-4.800" fill="none" stroke="#1762c2" stroke-width="2" stroke-linecap="round" stroke-linejoin="round"/><circle cx="13.600" cy="13.700" r="0.850" fill="#dce7f8"/></svg>
</main>
</div>
</body>
</html>
